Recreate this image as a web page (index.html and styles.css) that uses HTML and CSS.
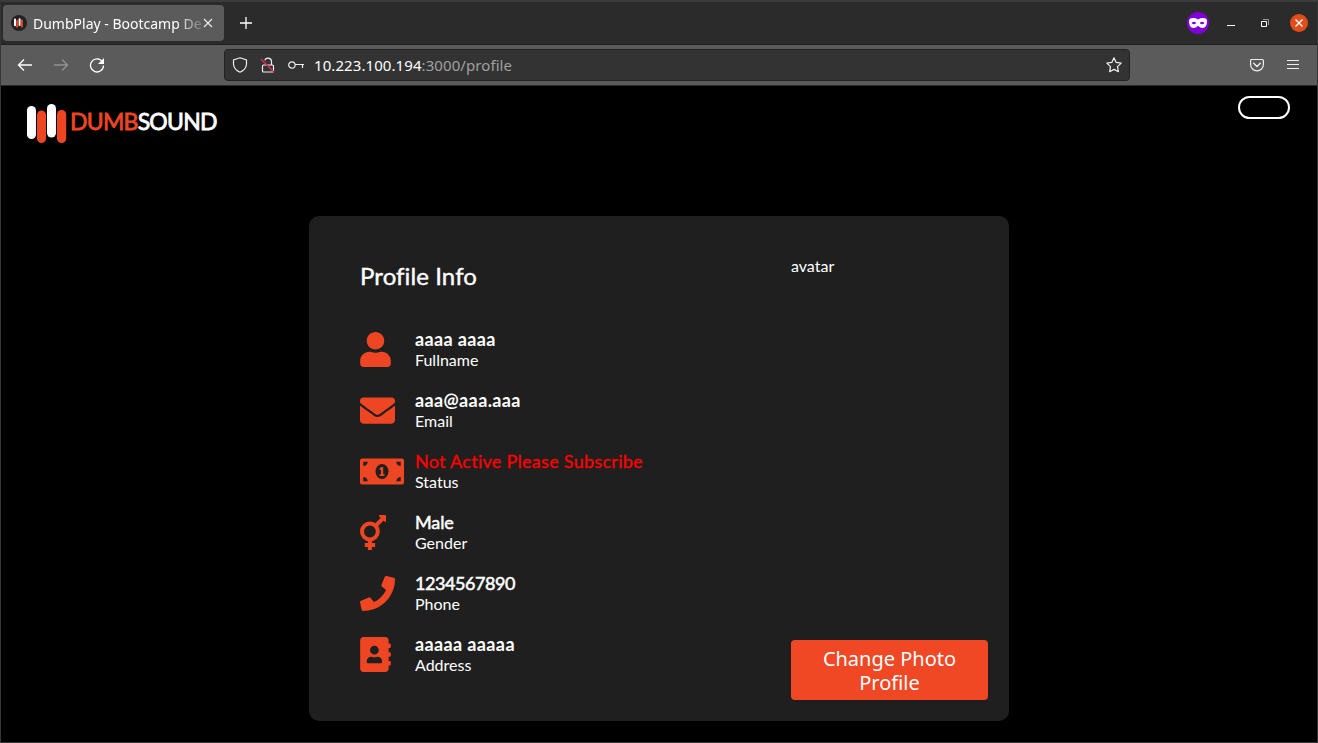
FILE: index.html
```html
<!DOCTYPE html>
<html lang="en">
<head>
<meta charset="utf-8">
<title>DumbPlay - Bootcamp</title>
<link rel="stylesheet" href="styles.css">
</head>
<body>
<div class="window">
  <header class="tabs">
    <div class="tab">
      <svg class="favicon" width="16" height="16" viewBox="0 0 16 16"><circle cx="8" cy="8" r="8" fill="#222"/><g stroke-width="2" stroke-linecap="round"><path stroke="#fff" d="M4 4.5v5.8M8.6 4.2v5.8"/><path stroke="#ee4622" d="M6.2 6v5.8M10.9 5.5v6"/></g></svg>
      <span class="tab-title">DumbPlay - Bootcamp De</span>
      <svg class="tab-close" width="10" height="10" viewBox="0 0 10 10" stroke="#eee" stroke-width="1.1"><path d="M1 1l8 8M9 1l-8 8"/></svg>
    </div>
    <svg class="new-tab" width="12" height="12" viewBox="0 0 12 12" stroke="#fff" stroke-width="1.3"><path d="M6 0v12M0 6h12"/></svg>
    <div class="controls">
      <svg width="22" height="22" viewBox="0 0 22 22"><circle cx="11" cy="11" r="11" fill="#8000d7"/><path fill="#fff" fill-rule="evenodd" d="M2 9Q2 6 6 6Q9 6 11 7.4Q13 6 16 6Q20 6 20 9Q20 16 15.5 16Q13 16 11 13.7Q9 16 6.500 16Q2 16 2 9zM4.500 11Q7 13.500 9.300 11Q7 8.700 4.500 11zM12.700 11Q15 13.500 17.500 11Q15 8.700 12.700 11z"/></svg>
      <svg class="minimize" width="8" height="10" viewBox="0 0 8 10"><path fill="#fff" d="M0 7h8v1H0z"/></svg>
      <svg class="restore" width="8" height="8" viewBox="0 0 8 8" fill="none"><path stroke="#999" d="M2 .5h5.500V6"/><path stroke="#fff" d="M.5 2.500h5v5h-5z"/></svg>
      <svg class="close" width="18" height="18" viewBox="0 0 18 18"><circle cx="9" cy="9" r="9" fill="#e14c18"/><path stroke="#fff" stroke-width="1.400" d="M5.500 5.500l7 7M12.500 5.500l-7 7"/></svg>
    </div>
  </header>
  <div class="toolbar">
    <div class="nav">
      <svg width="16" height="16" viewBox="0 0 16 16" stroke="#fff"><path d="M15 8H1.500M7 2.500L1.500 8 7 13.500"/></svg>
      <svg width="16" height="16" viewBox="0 0 16 16" stroke="#929292"><path d="M1 8h13.500M9 2.500L14.500 8 9 13.500"/></svg>
      <svg width="16" height="16" viewBox="0 0 16 16" stroke="#fff"><path d="M13.500 5A6.500 6.500 0 1 0 14.500 8.500"/><path fill="#fff" stroke="none" d="M15 1v6H9z"/></svg>
    </div>
    <div class="address">
      <svg width="16" height="16" viewBox="0 0 16 16"><path d="M8 .8L14.500 3v4.200Q14 12.500 8 15.200 2 12.500 1.500 7.200V3z"/></svg>
      <svg width="16" height="16" viewBox="0 0 16 16"><rect x="2.500" y="8" width="11" height="7" rx="1"/><path d="M11.500 8V4.500A3.500 3.500 0 0 0 4.800 3.200"/><path stroke="#e22850" stroke-width="1.500" d="M1 2l13 13"/></svg>
      <svg width="16" height="16" viewBox="0 0 16 16"><circle cx="3.900" cy="8" r="3.200"/><path d="M7.100 7.500H16M14.500 7.500V11"/></svg>
      <span class="url">10.223.100.194<span class="url-path">:3000/profile</span></span>
      <svg class="star" width="16" height="16" viewBox="0 0 16 16" stroke-linejoin="round"><path d="M8 .8l2.200 4.600 5 .7-3.700 3.500.9 5.100L8 12.400l-4.400 2.300.9-5.100L.8 6.100l5-.7z"/></svg>
    </div>
    <div class="actions">
      <svg width="14" height="14" viewBox="0 0 14 14"><path d="M1.600 1.500h10.800q1 0 1 1V6.500a6.400 6.400 0 0 1-12.800 0v-4q0-1 1-1z"/><path d="M3.700 5.300L7 8.500l3.300-3.200" stroke-linecap="round" stroke-width="1.400"/></svg>
      <svg width="12" height="12" viewBox="0 0 12 12"><path d="M0 1.500h12M0 5.500h12M0 9.500h12"/></svg>
    </div>
  </div>
  <main class="page">
    <nav class="site-nav">
      <div class="brand">
        <svg width="40" height="40" viewBox="0 0 40 40"><g fill="#fff"><rect y="2" width="9" height="33" rx="4.500"/><rect x="20" width="9" height="33.500" rx="4.500"/></g><g fill="#ee4622"><rect x="10" y="6.500" width="9" height="32.500" rx="4.500"/><rect x="30" y="6" width="9.200" height="33" rx="4.500"/></g></svg>
        <span class="wordmark"><span class="accent">DUMB</span>SOUND</span>
      </div>
      <div class="avatar-pill"></div>
    </nav>
    <section class="card">
      <div class="info">
        <h1 class="heading">Profile Info</h1>
        <ul class="rows">
          <li class="row"><span class="icon"><svg width="31" height="35" viewBox="0 0 448 512"><path d="M224 256c70.700 0 128-57.300 128-128S294.700 0 224 0 96 57.300 96 128s57.300 128 128 128zm89.600 32h-16.700c-22.200 10.200-46.900 16-72.900 16s-50.600-5.800-72.900-16h-16.700C60.200 288 0 348.200 0 422.400V464c0 26.500 21.500 48 48 48h352c26.500 0 48-21.500 48-48v-41.600c0-74.200-60.200-134.400-134.400-134.400z"/></svg></span><div><p class="value name">aaaa aaaa</p><p class="label">Fullname</p></div></li>
          <li class="row"><span class="icon"><svg width="35" height="35" viewBox="0 0 512 512"><path d="M502.300 190.800c3.900-3.100 9.700-.2 9.700 4.700V400c0 26.500-21.500 48-48 48H48c-26.500 0-48-21.500-48-48V195.600c0-5 5.700-7.800 9.700-4.700 22.400 17.400 52.100 39.500 154.100 113.600 21.100 15.400 56.700 47.800 92.200 47.600 35.700.3 72-32.800 92.300-47.600 102-74.100 131.600-96.300 154-113.700zM256 320c23.200.4 56.600-29.200 73.400-41.400 132.700-96.300 142.800-104.700 173.400-128.700 5.800-4.500 9.200-11.500 9.200-18.900v-19c0-26.500-21.500-48-48-48H48c-26.500 0-48 21.500-48 48v19c0 7.400 3.400 14.300 9.200 18.900 30.600 23.900 40.700 32.400 173.400 128.700 16.800 12.200 50.200 41.800 73.400 41.400z"/></svg></span><div><p class="value name">aaa@aaa.aaa</p><p class="label">Email</p></div></li>
          <li class="row"><span class="icon"><svg width="44" height="35" viewBox="0 0 44 35"><rect y="4.400" width="44" height="26.200" rx="2"/><g fill="#1f1f1f"><path d="M3.300 7.700h4.400a4.400 4.400 0 0 1-4.400 4.400zM40.700 7.700h-4.400a4.400 4.400 0 0 0 4.400 4.400zM3.300 27.300h4.400a4.400 4.400 0 0 0-4.400-4.400zM40.700 27.300h-4.400a4.400 4.400 0 0 1 4.400-4.400z"/><ellipse cx="22" cy="17.500" rx="6.500" ry="7.600"/></g><path d="M21.200 13h2v7.300h1.300V22h-5v-1.700H21v-4.600l-1.400.4v-1.800z"/></svg></span><div><p class="value status">Not Active Please Subscribe</p><p class="label">Status</p></div></li>
          <li class="row"><span class="icon"><svg class="outline" width="27" height="35" viewBox="0 0 27 35"><circle cx="9.900" cy="16.500" r="7.900"/><path d="M15.400 11L23 3.400M9.900 24v11M4.700 30h10.400"/><path class="head" d="M19 0h6.200q.8 0 .8.800V7l-1.500-.4-5.200-5.200z"/></svg></span><div><p class="value medium">Male</p><p class="label">Gender</p></div></li>
          <li class="row"><span class="icon"><svg width="35" height="35" viewBox="0 0 512 512"><path d="M493.400 24.600l-104-24c-11.300-2.600-22.900 3.300-27.500 13.900l-48 112c-4.200 9.800-1.400 21.300 6.900 28l60.600 49.600c-36 76.700-98.900 140.500-177.200 177.200l-49.600-60.600c-6.800-8.300-18.200-11.100-28-6.900l-112 48C3.900 366.500-2 378.100.6 389.400l24 104C27.100 504.200 36.700 512 48 512c256.100 0 464-207.500 464-464 0-11.200-7.700-20.900-18.600-23.400z"/></svg></span><div><p class="value medium phone">1234567890</p><p class="label">Phone</p></div></li>
          <li class="row"><span class="icon"><svg width="31" height="35" viewBox="0 0 448 512"><path d="M436 160c6.600 0 12-5.400 12-12v-40c0-6.600-5.400-12-12-12h-20V48c0-26.500-21.500-48-48-48H48C21.500 0 0 21.500 0 48v416c0 26.500 21.500 48 48 48h320c26.500 0 48-21.500 48-48v-48h20c6.600 0 12-5.400 12-12v-40c0-6.600-5.400-12-12-12h-20v-64h20c6.600 0 12-5.400 12-12v-40c0-6.600-5.400-12-12-12h-20v-64h20zm-228-32c35.300 0 64 28.700 64 64s-28.700 64-64 64-64-28.700-64-64 28.700-64 64-64zm112 236.800c0 10.600-10 19.200-22.400 19.200H118.400C106 384 96 375.400 96 364.800v-19.200c0-31.800 30.100-57.600 67.200-57.600h5c12.300 5.100 25.700 8 39.800 8s27.600-2.900 39.800-8h5c37.100 0 67.200 25.800 67.200 57.600v19.200z"/></svg></span><div><p class="value name">aaaaa aaaaa</p><p class="label">Address</p></div></li>
        </ul>
      </div>
      <div class="photo">
        <span class="photo-alt">avatar</span>
        <button class="change">Change Photo Profile</button>
      </div>
    </section>
  </main>
</div>
</body>
</html>
```

FILE: styles.css
```css
* { box-sizing: border-box; }
body { margin: 0; background: #000; font-family: Lato, sans-serif; color: #fff; font-variant-ligatures: none; }
svg { display: block; flex: none; }
p, h1, ul { margin: 0; padding: 0; }
.window { width: 1318px; height: 743px; border: 1px solid #373535; border-top: 2px solid #3c3c3c; overflow: hidden; display: flex; flex-direction: column; }
.tabs { height: 43px; background: #2b2b2b; border-bottom: 1px solid #202020; display: flex; align-items: center; padding: 0 9px 0 2px; font-family: "Noto Sans", sans-serif; }
.tab { width: 221px; height: 36px; background: #5b5b5b; border-radius: 4px; display: flex; align-items: center; padding: 0 10px 0 8px; }
.tab-title { margin-left: 6px; width: 170px; white-space: nowrap; font-size: 14px; letter-spacing: 0; -webkit-mask-image: linear-gradient(90deg, #000 143px, transparent 174px); mask-image: linear-gradient(90deg, #000 143px, transparent 174px); }
.new-tab { margin-left: 16px; }
.controls { margin-left: auto; display: flex; align-items: center; }
.minimize { margin-left: 18px; }
.restore { margin-left: 26px; }
.close { margin-left: 21px; }
.toolbar { height: 41px; flex: none; background: #5b5b5b; border-bottom: 1px solid #2b2b2b; display: flex; align-items: center; padding: 0 18px 0 16px; }
.nav { display: flex; gap: 20px; width: 207px; fill: none; stroke-width: 1.3; }
.address { width: 906px; height: 32px; background: #333; border: 1px solid #222; border-radius: 4px; display: flex; align-items: center; gap: 12px; padding: 0 7px; fill: none; stroke: #eee; stroke-width: 1.2; }
.url { margin-left: -2px; font: 15px "Noto Sans", sans-serif; letter-spacing: 0.08px; stroke: none; white-space: nowrap; }
.url-path { color: #a0a0a0; }
.star { margin-left: auto; }
.actions { margin-left: auto; display: flex; align-items: center; gap: 23px; fill: none; stroke: #eee; stroke-width: 1.2; }
.page { flex: 1; padding: 10px 27px 0 26px; }
.site-nav { display: flex; justify-content: space-between; height: 120px; }
.brand { display: flex; align-items: flex-start; gap: 3px; padding-top: 8px; }
.wordmark { font-size: 23px; line-height: 34px; font-weight: 400; letter-spacing: -0.75px; -webkit-text-stroke: 0.8px currentColor; }
.accent { color: #ee4622; }
.avatar-pill { width: 52px; height: 23px; border: 2px solid #fff; border-radius: 12px; }
.card { width: 700px; height: 505px; margin-left: 282px; background: #1f1f1f; border-radius: 10px; padding: 40px 21px 21px 51px; display: flex; justify-content: space-between; }
.heading { font-size: 24px; line-height: 40px; font-weight: 400; letter-spacing: 0.1px; white-space: nowrap; -webkit-text-stroke: 0.4px #fff; }
.rows { list-style: none; padding-top: 32px; }
.row { height: 61px; display: flex; }
.icon { width: 55px; padding-top: 4px; fill: #ee4622; }
.outline { fill: none; stroke: #ee4622; stroke-width: 4; }
.head { fill: #ee4622; stroke: none; }
.value { font-size: 18px; line-height: 22px; font-weight: 700; white-space: nowrap; }
.name { letter-spacing: 0.38px; }
.medium { font-weight: 400; letter-spacing: -0.1px; -webkit-text-stroke: 0.5px #fff; }
.phone { letter-spacing: -0.45px; }
.label { font-size: 16px; line-height: 20px; }
.status { color: #f00; font-weight: 400; letter-spacing: 0.28px; -webkit-text-stroke: 0.3px #f00; }
.photo { width: 197px; display: flex; flex-direction: column; justify-content: space-between; }
.photo-alt { font-size: 16px; line-height: 20px; }
.change { height: 60px; border: 0; border-radius: 4px; background: #f04824; color: #fff; font: 20px/24px "Noto Sans", sans-serif; padding: 2px 25px 0; }
```
